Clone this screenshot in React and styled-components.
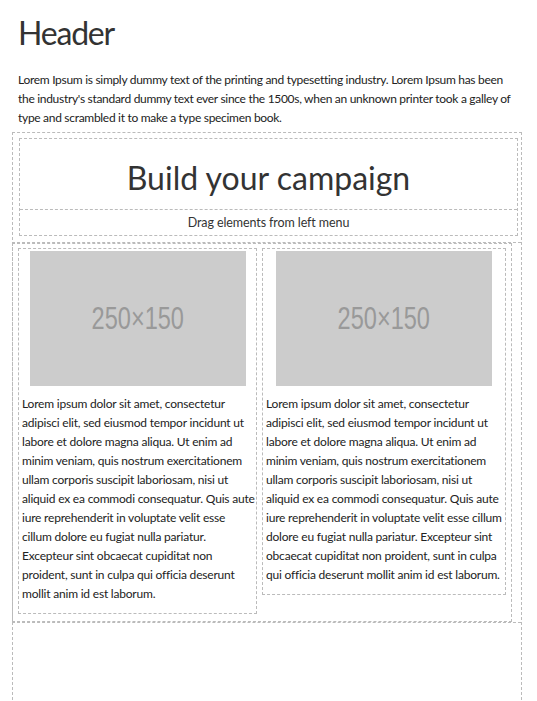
import React from 'react';
import styled, { createGlobalStyle } from 'styled-components';

const GlobalStyle = createGlobalStyle`
  html, body {
    margin: 0;
    padding: 0;
    background: #fff;
  }
  body {
    font-family: Lato, "Liberation Sans", sans-serif;
    font-size: 12px;
    letter-spacing: -0.2px;
    color: #222;
  }
`;

const Page = styled.div`
  height: 100vh;
  overflow: hidden;
  display: flex;
  flex-direction: column;
  padding: 13px 15px 0 12px;
  box-sizing: border-box;
`;

const Intro = styled.div`
  padding: 0 6px;
`;

const Title = styled.h1`
  margin: 0;
  font-size: 32px;
  line-height: 40px;
  font-weight: 400;
  letter-spacing: -1.2px;
  color: #333;
`;

const Lead = styled.p`
  margin: 17px 0 5px;
  line-height: 19px;
  letter-spacing: -0.3px;
`;

const Canvas = styled.div`
  flex: 1 0 auto;
  margin-bottom: -4px;
  border: 1px dashed #bbb;
`;

const HeadBlock = styled.div`
  margin: 5px 3px 6px 6px;
  border: 1px dashed #bbb;
  text-align: center;
`;

const CampaignTitle = styled.h2`
  margin: 0;
  height: 70px;
  display: flex;
  align-items: center;
  justify-content: center;
  padding-top: 6px;
  box-sizing: border-box;
  font-size: 32px;
  font-weight: 400;
  letter-spacing: 0;
  color: #333;
`;

const Hint = styled.p`
  margin: 0;
  border-top: 1px dashed #bbb;
  height: 25px;
  line-height: 25px;
  font-size: 12.5px;
  letter-spacing: -0.1px;
  color: #333;
`;

const Section = styled.div`
  margin-left: -1px;
  border-top: 1px dashed #bbb;
  border-bottom: 1px dashed #bbb;
`;

const Row = styled.div`
  margin-right: 9px;
  border: 1px dashed #bbb;
  display: grid;
  grid-template-columns: 239px 244px;
  column-gap: 5px;
  align-items: start;
  padding: 4px 5px 7px;
`;

const Column = styled.div`
  border: 1px dashed #bbb;
  padding: 2px 0 10px 3px;
`;

const Placeholder = styled.div`
  width: 216px;
  height: 135px;
  margin: 0 auto;
  position: relative;
  left: -1.5px;
  background: #ccc;
  display: flex;
  align-items: center;
  justify-content: center;
`;

const PlaceholderLabel = styled.span`
  display: inline-block;
  transform: scaleX(0.76);
  font-family: "Liberation Sans", Arial, sans-serif;
  font-size: 31px;
  letter-spacing: 0;
  color: #999;
`;

const Copy = styled.p`
  margin: 8px 0 0;
  line-height: 19px;
`;

const lorem =
  'Lorem ipsum dolor sit amet, consectetur adipisci elit, sed eiusmod tempor incidunt ut labore et dolore magna aliqua. Ut enim ad minim veniam, quis nostrum exercitationem ullam corporis suscipit laboriosam, nisi ut aliquid ex ea commodi consequatur. Quis aute iure reprehenderit in voluptate velit esse cillum dolore eu fugiat nulla pariatur. Excepteur sint obcaecat cupiditat non proident, sunt in culpa qui officia deserunt mollit anim id est laborum.';

const ImageText = () => (
  <Column>
    <Placeholder>
      <PlaceholderLabel>250×150</PlaceholderLabel>
    </Placeholder>
    <Copy>{lorem}</Copy>
  </Column>
);

export default function App() {
  return (
    <>
      <GlobalStyle />
      <Page>
        <Intro>
          <Title>Header</Title>
          <Lead>
            Lorem Ipsum is simply dummy text of the printing and typesetting industry. Lorem Ipsum has been
            the industry's standard dummy text ever since the 1500s, when an unknown printer took a galley of
            type and scrambled it to make a type specimen book.
          </Lead>
        </Intro>
        <Canvas>
          <HeadBlock>
            <CampaignTitle>Build your campaign</CampaignTitle>
            <Hint>Drag elements from left menu</Hint>
          </HeadBlock>
          <Section>
            <Row>
              <ImageText />
              <ImageText />
            </Row>
          </Section>
        </Canvas>
      </Page>
    </>
  );
}
